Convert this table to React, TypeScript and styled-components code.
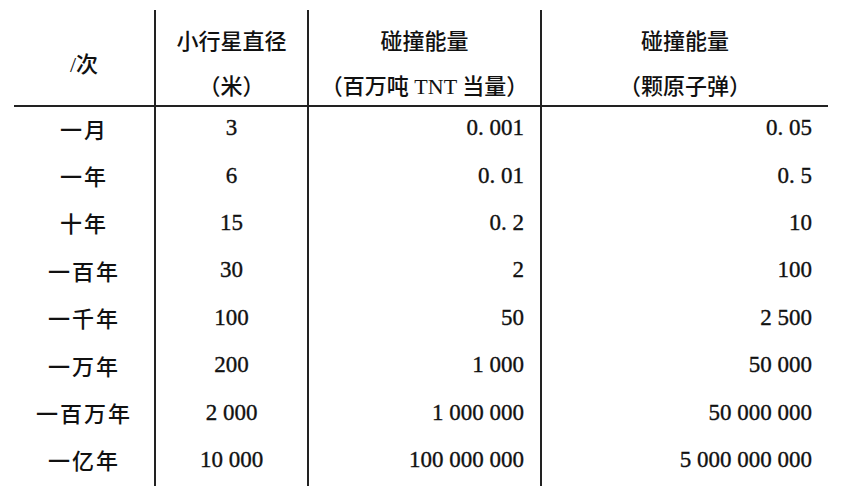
import styled, { createGlobalStyle } from "styled-components";

const GlobalStyle = createGlobalStyle`
  body {
    margin: 0;
    background: #ffffff;
    color: #111111;
    font-family: "Liberation Serif", "Noto Sans CJK SC", serif;
  }
`;

const COLUMNS = "140px 153px 233px 288px";
const RULE = "2px solid #222222";

const Sheet = styled.div`
  margin: 10px 0 0 14px;
  width: 814px;
`;

const HeadRow = styled.div`
  display: grid;
  grid-template-columns: ${COLUMNS};
  height: 95px;
  border-bottom: ${RULE};
`;

const HeadCell = styled.div<{ $divider?: boolean }>`
  display: flex;
  flex-direction: column;
  align-items: center;
  justify-content: center;
  padding-top: 9px;
  border-left: ${(p) => (p.$divider ? RULE : "none")};
  font-size: 22px;
  font-weight: 500;
  white-space: nowrap;
`;

const HeadLine = styled.div`
  line-height: 45px;
`;

const Row = styled.div`
  display: grid;
  grid-template-columns: ${COLUMNS};
  height: 47.4px;
`;

const Cell = styled.div<{ $align: "center" | "right"; $pad?: number; $divider?: boolean }>`
  display: flex;
  align-items: center;
  justify-content: ${(p) => (p.$align === "right" ? "flex-end" : "center")};
  padding-right: ${(p) => p.$pad ?? 0}px;
  padding-bottom: 6px;
  border-left: ${(p) => (p.$divider ? RULE : "none")};
  font-size: 23px;
  line-height: 1;
  white-space: nowrap;
  -webkit-text-stroke: 0.35px #111111;
`;

const Label = styled.span`
  font-family: "Noto Sans CJK SC", sans-serif;
  font-size: 22px;
  font-weight: 500;
  letter-spacing: 2px;
  -webkit-text-stroke: 0;
`;

const rows = [
  ["一月", "3", "0. 001", "0. 05"],
  ["一年", "6", "0. 01", "0. 5"],
  ["十年", "15", "0. 2", "10"],
  ["一百年", "30", "2", "100"],
  ["一千年", "100", "50", "2 500"],
  ["一万年", "200", "1 000", "50 000"],
  ["一百万年", "2 000", "1 000 000", "50 000 000"],
  ["一亿年", "10 000", "100 000 000", "5 000 000 000"],
];

export default function App() {
  return (
    <>
      <GlobalStyle />
      <Sheet>
        <HeadRow>
          <HeadCell>
            <HeadLine>/次</HeadLine>
          </HeadCell>
          <HeadCell $divider>
            <HeadLine>小行星直径</HeadLine>
            <HeadLine>（米）</HeadLine>
          </HeadCell>
          <HeadCell $divider>
            <HeadLine>碰撞能量</HeadLine>
            <HeadLine>（百万吨 TNT 当量）</HeadLine>
          </HeadCell>
          <HeadCell $divider>
            <HeadLine>碰撞能量</HeadLine>
            <HeadLine>（颗原子弹）</HeadLine>
          </HeadCell>
        </HeadRow>
        {rows.map(([period, size, tnt, bombs]) => (
          <Row key={period}>
            <Cell $align="center">
              <Label>{period}</Label>
            </Cell>
            <Cell $align="center" $divider>
              {size}
            </Cell>
            <Cell $align="right" $pad={16} $divider>
              {tnt}
            </Cell>
            <Cell $align="right" $pad={16} $divider>
              {bombs}
            </Cell>
          </Row>
        ))}
      </Sheet>
    </>
  );
}
